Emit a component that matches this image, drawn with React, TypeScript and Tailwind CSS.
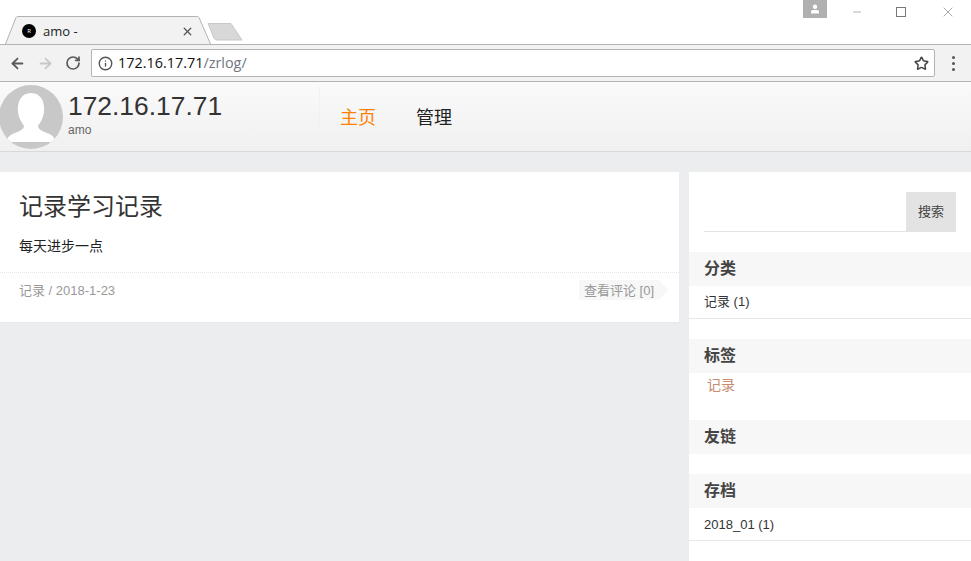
import { ArrowLeft, ArrowRight, RotateCw, Info, Star, X, Minus } from "lucide-react";

const sans = "font-['Liberation_Sans','Noto_Sans_CJK_SC',sans-serif]";

function SideHeading({ title }: { title: string }) {
    return (
        <h3 className="h-[34px] bg-[#f7f7f7] pl-[15px] text-[16px] leading-[33px] font-bold text-[#444]">{title}</h3>
    );
}

function BrowserChrome() {
    return (
        <div className="flex flex-col font-['Open_Sans','Noto_Sans_CJK_SC',sans-serif]">
            {/* tab strip */}
            <div className="flex h-[44px] items-start bg-white">
                <div className="relative mt-[16px] ml-[5px] h-[28px] w-[206px]">
                    <svg width="206" height="29" viewBox="0 0 206 29" className="absolute top-0 left-0">
                        <path d="M0.5 28 L11 1.5 Q11.5 0.5 13 0.5 L192 0.5 Q193.5 0.5 194 1.5 L205.5 28 Z" fill="#f2f2f2" />
                        <path d="M0.5 28 L11 1.5 Q11.5 0.5 13 0.5 L192 0.5 Q193.5 0.5 194 1.5 L205.5 28" fill="none" stroke="#b3b3b3" />
                    </svg>
                    <div className="relative flex h-full items-center pt-[2px] pl-[17px]">
                        <span className="flex h-[14px] w-[14px] items-center justify-center rounded-full bg-black text-[6px] leading-none text-white">R</span>
                        <span className="ml-[7px] text-[13px] leading-none text-[#222]">amo -</span>
                        <X className="ml-[103px] h-[13px] w-[13px] text-[#555]" strokeWidth={2.4} />
                    </div>
                </div>
                <svg width="36" height="18" viewBox="0 0 36 18" className="mt-[23px] ml-[-4px]">
                    <path d="M1 0.5 L24 0.5 L35 17 L10 17 Q8 17 7 15 Z" fill="#d8d8d8" stroke="#c8c8c8" />
                </svg>
                <div className="ml-auto flex h-[18px] items-start">
                    <div className="flex h-[18px] w-[24px] items-center justify-center bg-[#b0b0b0]">
                        <svg width="10" height="10" viewBox="0 0 10 10" fill="#fff">
                            <circle cx="5" cy="2.7" r="2.2" />
                            <path d="M1 9.5 L1 7.6 Q1 6.2 3 6 L7 6 Q9 6.2 9 7.6 L9 9.5 Z" />
                        </svg>
                    </div>
                    <Minus className="mt-[6px] ml-[24px] h-[12px] w-[12px] text-[#666]" strokeWidth={1} />
                    <div className="mt-[7px] ml-[33px] h-[10px] w-[10px] border border-[#777]" />
                    <X className="mt-[4px] ml-[34px] h-[16px] w-[16px] text-[#777]" strokeWidth={1} />
                    <div className="w-[15px]" />
                </div>
            </div>
            {/* toolbar */}
            <div className="flex h-[38px] items-center border-y border-[#b3b3b3] bg-[#f2f2f2] pl-[9px]">
                <ArrowLeft className="h-[17px] w-[17px] text-[#5a5a5a]" strokeWidth={2.5} />
                <ArrowRight className="ml-[11px] h-[17px] w-[17px] text-[#c8c8c8]" strokeWidth={2.5} />
                <RotateCw className="ml-[11px] h-[16px] w-[16px] text-[#5a5a5a]" strokeWidth={2.6} />
                <div className="ml-[10px] flex h-[28px] w-[844px] items-center rounded-[2px] border border-[#b3b3b3] bg-white pr-[5px] pl-[6px]">
                    <Info className="h-[15px] w-[15px] text-[#555]" strokeWidth={2.2} />
                    <span className="ml-[5px] text-[14.4px] text-[#111]">172.16.17.71<span className="text-[#6f7480]">/zrlog/</span></span>
                    <Star className="ml-auto h-[15px] w-[15px] text-[#444]" strokeWidth={2.4} />
                </div>
                <div className="ml-[17px] flex flex-col gap-[3px]">
                    <span className="h-[3px] w-[3px] rounded-full bg-[#555]" />
                    <span className="h-[3px] w-[3px] rounded-full bg-[#555]" />
                    <span className="h-[3px] w-[3px] rounded-full bg-[#555]" />
                </div>
            </div>
        </div>
    );
}

export default function App() {
    return (
        <div className={`flex h-[561px] w-[971px] flex-col overflow-hidden bg-[#ecedef] ${sans}`}>
            <BrowserChrome />

            {/* site header */}
            <header className="flex h-[70px] border-b border-[#d9d9d9] bg-gradient-to-b from-[#fafafa] to-[#f0f0f0]">
                <div className="mt-[3px] ml-[-1px] h-[64px] w-[64px] overflow-hidden rounded-full bg-[#c9c8c8]">
                    <svg width="64" height="64" viewBox="0 0 64 64" fill="#fff">
                        <path d="M32 8 C42 8 46 17 45 27 C44 34 41 38 39 41 C39 44 43 46 48 48 C54 50 56 53 56 57 L8 57 C8 53 10 50 16 48 C21 46 25 44 25 41 C23 38 20 34 19 27 C18 17 22 8 32 8 Z" />
                    </svg>
                </div>
                <div className="ml-[5px] w-[251px]">
                    <div className="mt-[7px] text-[26.4px] leading-[34px] text-[#333]">172.16.17.71</div>
                    <div className="text-[12px] leading-[14px] text-[#666]">amo</div>
                </div>
                <div className="mt-[5px] h-[38px] border-r border-dotted border-[#ececec]" />
                <nav className="ml-[20px] flex gap-[40px] pt-[24px] text-[18px] leading-[24px]">
                    <a className="text-[#ff7f00]">主页</a>
                    <a className="text-[#222]">管理</a>
                </nav>
            </header>

            <div className="mt-[20px] flex flex-1 items-start gap-[10px]">
                {/* article */}
                <main className="w-[679px] border-b border-[#e8e8e8] bg-white">
                    <div className="h-[100px] px-[19px]">
                        <h1 className="pt-[19px] text-[24px] leading-[32px] text-[#333]">记录学习记录</h1>
                        <p className="mt-[13px] text-[14px] leading-[20px] text-[#222]">每天进步一点</p>
                    </div>
                    <div className="flex h-[50px] items-start justify-between border-t border-dotted border-[#e6e6e6] pt-[7px] pr-[11px] pl-[19px]">
                        <span className="text-[13px] leading-[21px] text-[#999]">记录 / 2018-1-23</span>
                        <div className="flex">
                            <span className="h-[20px] bg-[#f7f7f7] px-[5px] text-[13px] leading-[21px] text-[#999]">查看评论 [0]</span>
                            <span className="h-0 w-0 border-y-[10px] border-l-[9px] border-y-transparent border-l-[#f7f7f7]" />
                        </div>
                    </div>
                </main>

                {/* sidebar */}
                <aside className="flex h-full w-[282px] flex-col bg-white">
                    <div className="mt-[20px] ml-[15px] flex h-[40px] w-[252px] justify-end border-b border-[#e4e4e4]">
                        <button className="h-[40px] w-[50px] bg-[#e3e3e3] text-[13px] text-[#444]">搜索</button>
                    </div>
                    <div className="mt-[20px]">
                        <SideHeading title="分类" />
                        <div className="h-[33px] border-b border-[#e8e8e8] pl-[15px] text-[13px] leading-[32px] text-[#333]">记录 (1)</div>
                    </div>
                    <div className="mt-[20px]">
                        <SideHeading title="标签" />
                        <div className="h-[47px] pl-[18px] text-[14px] leading-[25px] text-[#c98a6f]">记录</div>
                    </div>
                    <SideHeading title="友链" />
                    <div className="mt-[20px]">
                        <SideHeading title="存档" />
                        <div className="h-[33px] border-b border-[#e8e8e8] pl-[15px] text-[13px] leading-[33px] text-[#333]">2018_01 (1)</div>
                    </div>
                </aside>
            </div>
        </div>
    );
}
